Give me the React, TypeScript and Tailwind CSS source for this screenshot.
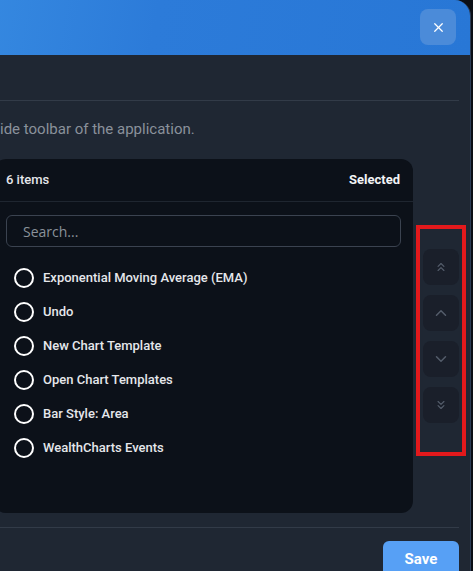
import React, { useState } from 'react';
import { X, ChevronsUp, ChevronUp, ChevronDown, ChevronsDown } from 'lucide-react';

const items = [
  'Exponential Moving Average (EMA)',
  'Undo',
  'New Chart Template',
  'Open Chart Templates',
  'Bar Style: Area',
  'WealthCharts Events',
];

export default function App() {
  const [query, setQuery] = useState('');
  const [selected, setSelected] = useState<string[]>([]);

  const toggle = (name: string) => {
    setSelected(prev => (prev.includes(name) ? prev.filter(n => n !== name) : [...prev, name]));
  };

  const visible = items.filter(i => i.toLowerCase().includes(query.toLowerCase()));

  return (
    <div className="w-[473px] h-[571px] overflow-hidden bg-[#0b0f16] font-['Roboto','Liberation_Sans',sans-serif]">
      <div className="ml-[-12px] w-[483px] h-[600px] rounded-tr-2xl overflow-hidden bg-[#1f2733] border-r border-[#2c3d57]">
        {/* Header */}
        <div className="h-[55px] flex items-start justify-end pt-[9px] pr-[14px] bg-[linear-gradient(100deg,#3588e0_0%,#2c7bd9_35%,#2877d6_100%)]">
          <button
            type="button"
            className="w-9 h-9 rounded-lg bg-[#4b8bd9] flex items-center justify-center text-white"
          >
            <X size={15} strokeWidth={2} />
          </button>
        </div>

        {/* Body */}
        <div className="pl-3 pr-[11px]">
          <div className="h-[46px] border-b border-[#323b48]" />
          <p className="pt-[18px] text-[15px] leading-5 text-[#8a919b] whitespace-nowrap">
            ide toolbar of the application.
          </p>

          <div className="mt-5 flex items-center gap-[10px]">
            {/* Items panel */}
            <div className="ml-[-6px] flex-1 h-[354px] rounded-xl bg-[#0c1119] flex flex-col">
              <div className="h-[43px] pl-3 pr-[13px] flex items-center justify-between border-b border-[#1f2630]">
                <span className="text-[13px] font-medium text-[#e5e7eb]">6 items</span>
                <span className="text-[13px] font-bold text-[#f3f4f6]">Selected</span>
              </div>
              <div className="px-3 pt-[13px]">
                <input
                  value={query}
                  onChange={e => setQuery(e.target.value)}
                  placeholder="Search..."
                  className="w-full h-8 rounded-md border border-[#3b4350] bg-[#0c1119] px-4 text-[14px] text-[#d1d5db] placeholder:text-[#8a919b] outline-none font-['Open_Sans',sans-serif]"
                />
              </div>
              <ul className="mt-[14px] px-3">
                {visible.map(name => (
                  <li
                    key={name}
                    onClick={() => toggle(name)}
                    className="h-[34px] flex items-center gap-[9px] pl-2 cursor-pointer"
                  >
                    <span
                      className={
                        selected.includes(name)
                          ? 'w-5 h-5 rounded-full border-2 border-white bg-white'
                          : 'w-5 h-5 rounded-full border-2 border-white'
                      }
                    />
                    <span className="text-[13px] font-medium text-[#e5e7eb]">{name}</span>
                  </li>
                ))}
              </ul>
            </div>

            {/* Move buttons */}
            <div className="relative flex flex-col gap-[10px]">
              {[ChevronsUp, ChevronUp, ChevronDown, ChevronsDown].map((Icon, i) => (
                <button
                  key={i}
                  type="button"
                  className="w-9 h-9 rounded-lg bg-[#1a1f2a] flex items-center justify-center text-[#545d6b]"
                >
                  <Icon size={i === 0 || i === 3 ? 14 : 18} strokeWidth={2} />
                </button>
              ))}
              <div className="absolute left-[-7px] right-[-7px] top-[-24px] bottom-[-33px] border-4 border-[#e3191c] pointer-events-none" />
            </div>
          </div>

          {/* Footer */}
          <div className="mt-[14px] border-t border-[#323b48] pt-[13px] flex justify-end">
            <button
              type="button"
              className="w-[76px] h-9 rounded-md bg-[#57a0f5] text-white text-[15px] font-bold"
            >
              Save
            </button>
          </div>
        </div>
      </div>
    </div>
  );
}
